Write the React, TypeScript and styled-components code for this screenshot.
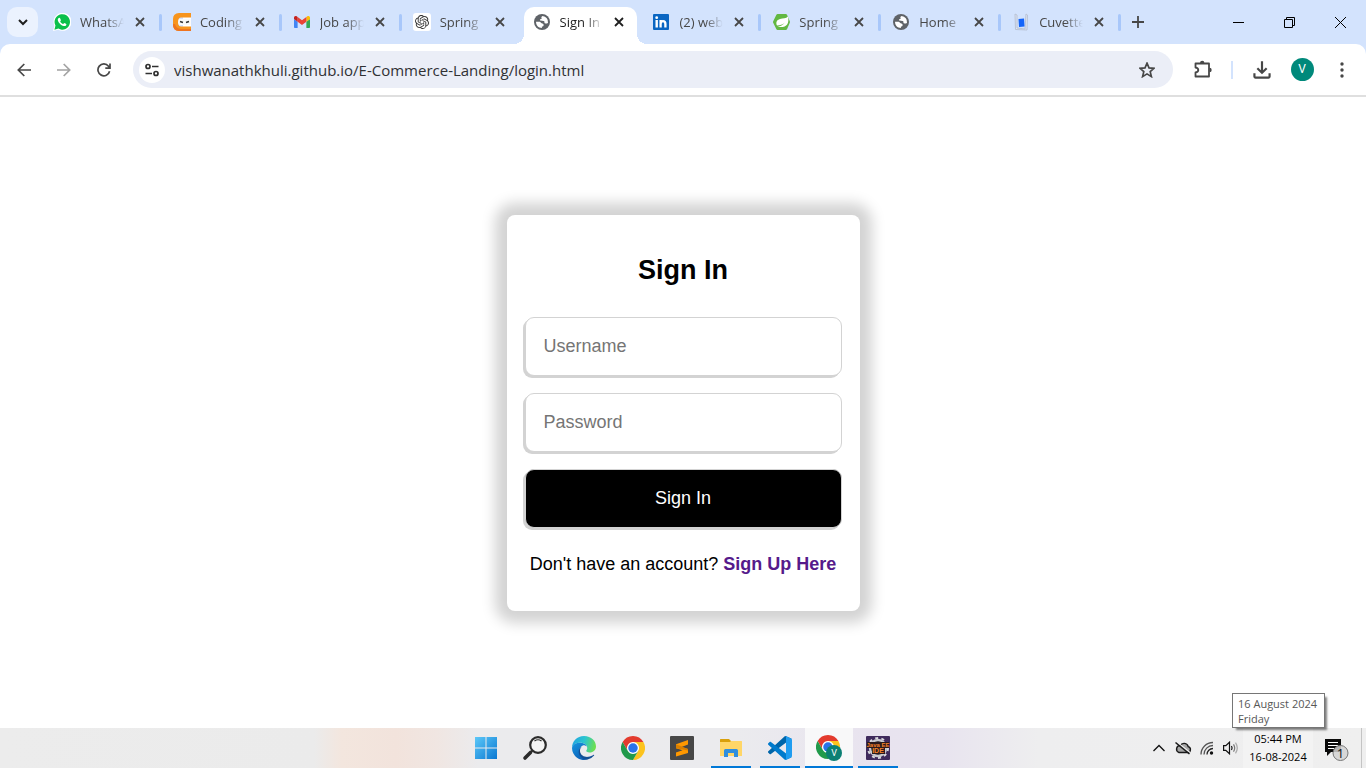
import React from 'react';
import styled, { createGlobalStyle, css } from 'styled-components';
import { SiOpenai } from 'react-icons/si';
import { MdOutlineFileDownload } from 'react-icons/md';

const uiFont = '"Open Sans", "Noto Sans", sans-serif';
const pageFont = '"Liberation Sans", Arial, sans-serif';

const GlobalStyle = createGlobalStyle`
  *, *::before, *::after { box-sizing: border-box; }
  body { margin: 0; background: #fff; font-family: ${uiFont}; }
  button { border: 0; padding: 0; background: none; font: inherit; color: inherit; cursor: pointer; }
  svg { display: block; flex: none; }
`;

const Screen = styled.div`
  min-height: 100vh;
  display: flex;
  flex-direction: column;
`;

/* ---------- tab strip ---------- */

const TabStrip = styled.header`
  height: 44px;
  display: flex;
  background: #d3e3fd;
`;

const TabSearch = styled.button`
  width: 31px;
  height: 30px;
  margin: 7px 4px 0 7px;
  display: grid;
  place-items: center;
  border-radius: 10px;
  background: #ebf2fe;
`;

const Tabs = styled.nav`
  flex: 1;
  min-width: 0;
  display: flex;
`;

const TabItem = styled.div<{ $active?: boolean; $divider?: boolean }>`
  position: relative;
  z-index: 0;
  flex: 1 1 0;
  min-width: 0;
  max-width: 240px;
  display: flex;
  align-items: center;
  padding-left: 12px;
  color: ${(p) => (p.$active ? '#1f1f1f' : '#474747')};

  ${(p) =>
    p.$divider &&
    css`
      &::after {
        content: '';
        position: absolute;
        right: 0;
        top: 14px;
        width: 3px;
        height: 17px;
        border-radius: 2px;
        background: #a8c7fa;
      }
    `}
`;

const ActiveShape = styled.span`
  position: absolute;
  z-index: -1;
  inset: 7px 4px 0 2px;
  border-radius: 10px 10px 0 0;
  background: #fff;

  &::before,
  &::after {
    content: '';
    position: absolute;
    bottom: 0;
    width: 10px;
    height: 10px;
  }
  &::before {
    right: 100%;
    background: radial-gradient(circle at 0 0, transparent 10px, #fff 10px);
  }
  &::after {
    left: 100%;
    background: radial-gradient(circle at 100% 0, transparent 10px, #fff 10px);
  }
`;

const TabLink = styled.a`
  flex: 1;
  min-width: 0;
  display: flex;
  align-items: center;
  gap: 10px;
  color: inherit;
  text-decoration: none;
`;

const TabTitle = styled.span`
  flex: 1;
  min-width: 0;
  overflow: hidden;
  white-space: nowrap;
  font-size: 13px;
  line-height: 20px;
  mask-image: linear-gradient(90deg, #000 calc(100% - 18px), transparent);
`;

const TabClose = styled.button`
  width: 16px;
  height: 16px;
  margin: 0 14px 0 8px;
  display: grid;
  place-items: center;
`;

const NewTab = styled.button`
  width: 34px;
  margin-right: 58px;
  display: grid;
  place-items: center;
  color: #474747;
`;

const WindowButton = styled.button`
  width: 51px;
  display: grid;
  place-items: center;
`;

/* ---------- toolbar ---------- */

const ToolbarBack = styled.div`
  background: #d3e3fd;
`;

const Toolbar = styled.div`
  height: 53px;
  display: flex;
  align-items: center;
  padding: 0 4px;
  border-bottom: 2px solid #dfdfdf;
  border-radius: 10px 10px 0 0;
  background: #fff;
`;

const ToolButton = styled.button<{ $dim?: boolean }>`
  width: 40px;
  height: 36px;
  display: grid;
  place-items: center;
  color: ${(p) => (p.$dim ? '#a3a3a3' : '#474747')};
`;

const Omnibox = styled.form`
  flex: 1;
  min-width: 0;
  height: 37px;
  margin: 0 10px 0 9px;
  padding: 0 6px;
  display: flex;
  align-items: center;
  border-radius: 19px;
  background: #ebeef7;
`;

const SiteInfo = styled.button`
  width: 26px;
  height: 26px;
  display: grid;
  place-items: center;
  border-radius: 50%;
  background: #fff;
  color: #303030;
`;

const AddressInput = styled.input`
  flex: 1;
  min-width: 0;
  height: 24px;
  margin-left: 9px;
  padding: 0;
  border: 0;
  outline: 0;
  background: transparent;
  color: #303134;
  font-family: ${uiFont};
  font-size: 15px;
`;

const ToolDivider = styled.span`
  width: 2px;
  height: 18px;
  margin: 0 9px 0 8px;
  background: #d3e3fd;
`;

const Avatar = styled.span`
  width: 23px;
  height: 23px;
  border-radius: 50%;
  background: #00897b;
  color: #fff;
  font: 12px/23px Roboto, sans-serif;
  text-align: center;
`;

/* ---------- page ---------- */

const Page = styled.main`
  flex: 1;
  display: flex;
  align-items: center;
  justify-content: center;
  padding: 32px 16px;
  font-family: ${pageFont};
`;

const Card = styled.form`
  width: 100%;
  max-width: 353px;
  padding: 37px 18px 35px;
  display: flex;
  flex-direction: column;
  gap: 17px;
  border-radius: 8px;
  background: #fff;
  box-shadow: 0 0 14px 12px lightgray;
`;

const Heading = styled.h1`
  margin: 0 0 12px;
  font-size: 27px;
  line-height: 36px;
  text-align: center;
`;

const controlStyle = css`
  width: 100%;
  height: 59px;
  border: 1px solid lightgray;
  border-radius: 9px;
  box-shadow: -2px 2px 0 lightgray;
  font-family: ${pageFont};
  font-size: 18px;
`;

const Field = styled.input`
  ${controlStyle}
  padding: 0 18px;
  background: #fff;
  outline: 0;

  &::placeholder {
    color: #757575;
  }
`;

const Submit = styled.button`
  ${controlStyle}
  border: 1px solid lightgray;
  background: #000;
  color: #fff;
`;

const Prompt = styled.p`
  margin: 7px 0 0;
  font-size: 18px;
  line-height: 24px;
  text-align: center;
  white-space: nowrap;

  a {
    color: #551a8b;
    font-weight: 700;
    text-decoration: none;
  }
`;

/* ---------- taskbar ---------- */

const Taskbar = styled.footer`
  height: 40px;
  display: grid;
  grid-template-columns: 1fr auto 1fr;
  background: linear-gradient(
    90deg,
    #ececec 0%,
    #ebebeb 23%,
    #f3e6de 25%,
    #f2e3dc 29%,
    #f0e6e2 32%,
    #ebebed 35%,
    #ebebee 54%,
    #e8e3ef 64%,
    #e8e4ef 69%,
    #eeeeef 76%,
    #efefef 100%
  );
`;

const Apps = styled.div`
  grid-column: 2;
  display: flex;
  gap: 1px;
  padding-right: 2px;
`;

const AppButton = styled.button<{ $running?: boolean; $focused?: boolean }>`
  position: relative;
  width: 48px;
  display: grid;
  place-items: center;
  background: ${(p) => (p.$focused ? '#f8f8f9' : 'transparent')};

  &::after {
    content: '';
    display: ${(p) => (p.$running ? 'block' : 'none')};
    position: absolute;
    bottom: 0;
    left: ${(p) => (p.$focused ? 0 : 4)}px;
    right: ${(p) => (p.$focused ? 0 : 4)}px;
    height: 2px;
    background: #0078d7;
  }
`;

const Tray = styled.div`
  grid-column: 3;
  display: flex;
  justify-content: flex-end;
`;

const TrayButton = styled.button`
  width: 24px;
  display: grid;
  place-items: center;
`;

const Clock = styled.div`
  position: relative;
  width: 70px;
  padding-top: 2px;
  background: #f3f3f3;
  color: #000;
  font-size: 11px;
  line-height: 18px;
  text-align: center;
  white-space: nowrap;

  time {
    display: block;
  }
`;

const DateTip = styled.div`
  position: absolute;
  right: -12px;
  bottom: 40px;
  width: 93px;
  height: 35px;
  padding: 2px 5px;
  border: 1px solid #767676;
  background: #fff;
  box-shadow: 3px 3px 2px -1px rgba(0, 0, 0, 0.5);
  color: #575757;
  font-size: 11px;
  line-height: 15px;
  text-align: left;
`;

const Notifications = styled.button`
  width: 49px;
  margin-right: 4px;
  padding-left: 10px;
  display: flex;
  align-items: center;
  border-right: 1px solid #c4c4c4;
`;

/* ---------- icons ---------- */

const Cross = () => (
  <svg width="10" height="10" viewBox="0 0 10 10" stroke="currentColor" strokeWidth="1.8">
    <path d="M1 1l8 8M9 1l-8 8" />
  </svg>
);

const WhatsAppIcon = () => (
  <svg width="18" height="18" viewBox="0 0 24 24">
    <path fill="#fff" d="M0 24L1.900 17A12 12 0 1 1 7 22.300z" />
    <path fill="#0ac04b" d="M1.900 22.200L3.300 16.800A10.300 10.300 0 1 1 7.200 20.800z" />
    <path
      fill="#fff"
      d="M8.400 6.200c-.8-.1-2.200 1.200-2 3 .3 2.700 4 7.400 8 8.200 2 .3 3.500-.8 3.500-2.500 0-.6-2.400-1.800-2.900-1.700-.6.2-1 1.500-1.500 1.400-1.200-.2-3.700-2.500-3.900-3.400 0-.5 1-1.100.9-1.700-.3-1-.9-3.100-2.100-3.300z"
    />
  </svg>
);

const NinjaIcon = () => (
  <svg width="18" height="18" viewBox="0 0 18 18">
    <path fill="#fff" d="M10 2h8v14h-8z" />
    <path fill="#f7941d" d="M6 0h12v4.500H8Q5.500 4.500 5.500 7v4.500Q5.500 13.500 8 13.500h10V18H6Q0 17.500 0 12V6Q0 .5 6 0z" />
    <path fill="#ee7420" d="M0 11v1q0 5.500 6 6h12v-2H8q-5-.5-6-5z" />
    <path fill="#fafafa" d="M6 6h11q1 0 1 1v4q0 1-1 1H7q-2 0-2-2.500T6 6z" />
    <path stroke="#333" strokeWidth="1.600" d="M7 8.500l3 1M13 9.500l3-1" />
  </svg>
);

const GmailIcon = () => (
  <svg width="16" height="12" viewBox="52 42 88 66">
    <path fill="#4285f4" d="M58 108h14V74L52 59v43c0 3.320 2.690 6 6 6" />
    <path fill="#34a853" d="M120 108h14c3.320 0 6-2.690 6-6V59l-20 15" />
    <path fill="#fbbc04" d="M120 48v26l20-15v-8c0-7.420-8.470-11.650-14.400-7.200" />
    <path fill="#ea4335" d="M72 74V48l24 18 24-18v26L96 92" />
    <path fill="#c5221f" d="M52 51v8l20 15V48l-5.600-4.200c-5.940-4.450-14.400-.22-14.400 7.200" />
  </svg>
);

const GptBox = styled.span`
  flex: none;
  width: 18px;
  height: 18px;
  display: grid;
  place-items: center;
  border-radius: 3px;
  background: #fff;
  color: #333;
`;

const GptIcon = () => (
  <GptBox>
    <SiOpenai size={14} />
  </GptBox>
);

const GlobeIcon = () => (
  <svg width="16" height="16" viewBox="0 0 16 16">
    <circle cx="8" cy="8" r="8" fill="#5f6368" />
    <path
      fill="#fff"
      d="M8.600 2c-1.200.7-1.600 1.200-1 2 .5.600-.4 1-1.200 1.200-.8.300-.5 1.200.2 1.400l3 .5c1 .2 1 1.400.8 2 .7.500 2.100.4 3.600-.2a6 6 0 0 0-5.400-6.900zM2 7.800c0 3.500 2.400 6.200 5.900 6.200v-1.400c1.500-.2 1.800-.9 1.700-1.900 0-.9-1-1.300-2-1.500C6.500 9 7 7.900 5.600 7.800z"
    />
  </svg>
);

const LinkedInIcon = () => (
  <svg width="16" height="16" viewBox="0 0 16 16">
    <rect width="16" height="16" rx="1" fill="#0a66c2" />
    <circle cx="3.700" cy="3.700" r="1.400" fill="#fff" />
    <path fill="#fff" d="M2.500 6h2.400v7.500H2.500z" />
    <path fill="none" stroke="#fff" strokeWidth="2.300" d="M7.600 13.500V6M7.600 10Q7.600 7.100 10 7.100T12.400 10v3.500" />
  </svg>
);

const SpringIcon = () => (
  <svg width="17" height="16" viewBox="0 0 17 16">
    <path fill="#62b842" d="M4.600 0h8.200q.8 0 1.200.8l2.800 6.400q.3.800 0 1.500L14 15.200q-.4.800-1.200.8H4.600q-.8 0-1.200-.7L.2 8.800q-.4-.8 0-1.600L3.400.8Q3.800 0 4.600 0z" />
    <path fill="#fff" d="M15 2.600c1 4.600.1 8.600-3.400 9.900-2.300.8-5 .6-7 .3C7.200 12.400 10 11.300 11.800 8.500 9.700 10.700 7 11.500 4 11.500 2.500 8.500 3.800 5.800 7 5c3-.6 6-.3 8-2.400z" />
  </svg>
);

const CuvetteIcon = () => (
  <svg width="14" height="18" viewBox="0 0 14 18">
    <path fill="#dfe6f3" stroke="#b9c3d6" d="M1 1l2 1v13l8 1 1-15 1.500 1L13 17l-11.500-.5z" />
    <path fill="#1565f9" d="M4.500 6l5.500-.5.500 8-5.500.5z" />
  </svg>
);

const SearchIcon = () => (
  <svg width="26" height="26" viewBox="0 0 26 26" fill="none" stroke="#2b2b2b">
    <circle cx="16" cy="10" r="7.800" strokeWidth="2.200" fill="#f4f4f4" />
    <path strokeWidth="3.600" strokeLinecap="round" d="M3 23l5.500-5.500" />
    <path strokeWidth="1.800" d="M8.500 17.500l2-2" />
    <path strokeWidth="1.200" d="M12.500 6Q16 3.500 19.500 6" />
  </svg>
);

const WindowsIcon = () => (
  <svg width="22" height="22" viewBox="0 0 22 22">
    <defs>
      <linearGradient id="win" x1="0" y1="0" x2="1" y2="1">
        <stop offset="0" stopColor="#5cc8f8" />
        <stop offset="1" stopColor="#0a78d2" />
      </linearGradient>
    </defs>
    <path fill="url(#win)" d="M0 0h10.500v10.500H0zM11.500 0H22v10.500H11.500zM0 11.500h10.500V22H0zM11.500 11.500H22V22H11.500z" />
  </svg>
);

const EdgeIcon = () => (
  <svg width="24" height="24" viewBox="0 0 24 24">
    <defs>
      <linearGradient id="edgeTop" x1="0" y1="0.300" x2="1" y2="0.500">
        <stop offset="0" stopColor="#22a5e0" />
        <stop offset="0.500" stopColor="#2cc5cf" />
        <stop offset="1" stopColor="#6fe04c" />
      </linearGradient>
      <linearGradient id="edgeSide" x1="0" y1="0" x2="0.600" y2="1">
        <stop offset="0" stopColor="#1795df" />
        <stop offset="1" stopColor="#0b61b8" />
      </linearGradient>
    </defs>
    <path fill="url(#edgeTop)" d="M0 12C0 5 5 0 12 0c7.500 0 12 5.200 12 10.500 0 3.500-2.800 6-6.200 6-2.600 0-4-.9-3.500-1.900.6-1 .9-1.500.9-2.600 0-3-3-5.200-7-5.200C3.800 6.800 1 9 0 12z" />
    <path fill="url(#edgeSide)" d="M0 12c.6-3.500 4-5.200 8-5.200 3.500 0 6 1.400 6.800 3.600-1-.9-2.200-1.200-3.400-1.200C8.500 10 6.800 13 7.700 16.500 8.600 20 11.500 22.300 15 23.500A12 12 0 0 1 0 12z" />
    <path fill="#124f96" d="M10 10.600c-1.500 1.200-2.400 3.200-1.900 5.400.8 3.400 4.400 5.300 8.300 4.800 2-.2 3.700-1 5.200-2 .5-.2.800.2.500.6A12 12 0 0 1 15 23.700c-4 0-8-3-8.300-7.700-.1-2.400 1.300-4.600 3.300-5.400z" />
  </svg>
);

const ChromeMark = () => (
  <g>
    <circle cx="24" cy="24" r="12" fill="#fff" />
    <path fill="#e33b2e" d="M24 12h20.780A23.990 23.990 0 0 0 3.220 12.003L13.608 30l.009-.002A11.985 11.985 0 0 1 24 12z" />
    <circle cx="24" cy="24" r="9.500" fill="#2a73e8" />
    <path fill="#fcc31e" d="M34.391 30.003L24.001 48A23.994 23.994 0 0 0 44.780 12.003H24l-.003.009a11.985 11.985 0 0 1 10.394 17.990z" />
    <path fill="#219a4b" d="M13.609 30.003L3.218 12.006A23.994 23.994 0 0 0 24.003 48l10.390-17.997-.007-.007a11.985 11.985 0 0 1-20.777.007z" />
  </g>
);

const ChromeIcon = () => (
  <svg width="24" height="24" viewBox="0 0 48 48">
    <ChromeMark />
  </svg>
);

const ChromeProfileIcon = () => (
  <svg width="26" height="26" viewBox="0 0 26 26">
    <svg width="24" height="24" viewBox="0 0 48 48">
      <ChromeMark />
    </svg>
    <circle cx="18" cy="18" r="8" fill="#0b8074" />
    <text x="18" y="21" fill="#fff" fontFamily="Roboto, sans-serif" fontSize="9" textAnchor="middle">
      V
    </text>
  </svg>
);

const SublimeIcon = () => (
  <svg width="24" height="24" viewBox="0 0 24 24">
    <rect width="24" height="24" rx="1" fill="#474747" />
    <path fill="#ff9800" d="M6 8.200L18 4v4.600L11.500 11 18 13v4L6 20.500v-4l6.500-2.300L6 12.200z" />
    <path fill="#d97f00" d="M6 8.200l12 4.800v1.500L6 12.200z" />
  </svg>
);

const FolderIcon = () => (
  <svg width="22" height="20" viewBox="0 0 22 20">
    <path fill="#d9a00b" d="M0 1.500Q0 1 .5 1H9l2 2v3H0z" />
    <path fill="#ffd667" d="M0 4h10l1-1h10.500q.5 0 .5.500V18H0z" />
    <path fill="#2f8ede" d="M4 19v-6.500q0-1.500 1.500-1.500h11q1.500 0 1.500 1.500V19h-4v-4H8v4z" />
  </svg>
);

const CodeIcon = () => (
  <svg width="24" height="24" viewBox="0 0 100 100">
    <path fill="#0065a9" d="M96.460 10.800L75.860.88C73.470-.27 70.620.21 68.750 2.080L1.300 63.580c-1.800 1.660-1.800 4.510 0 6.170l5.510 5c1.490 1.350 3.720 1.450 5.320.24L93.360 13.370C96.090 11.300 100 13.250 100 16.670v-.24c0-2.400-1.380-4.590-3.540-5.630z" />
    <path fill="#007acc" d="M96.460 89.200L75.860 99.120c-2.390 1.150-5.240.67-7.110-1.200L1.300 36.420c-1.800-1.660-1.800-4.510 0-6.170l5.510-5c1.490-1.350 3.720-1.450 5.320-.24l81.230 61.620c2.730 2.070 6.640.12 6.640-3.300v.24c0 2.400-1.380 4.590-3.540 5.630z" />
    <path fill="#1f9cf0" d="M75.860 99.130c-2.390 1.140-5.240.66-7.110-1.210 2.310 2.300 6.250.67 6.250-2.590V4.670c0-3.260-3.940-4.890-6.250-2.590 1.870-1.870 4.720-2.350 7.110-1.210l20.600 9.910c2.160 1.040 3.540 3.230 3.540 5.630v67.180c0 2.400-1.380 4.590-3.540 5.630z" />
  </svg>
);

const JavaIdeIcon = () => (
  <svg width="24" height="24" viewBox="0 0 24 24">
    <rect width="24" height="24" rx="1" fill="#3f2a5c" />
    <circle cx="12" cy="12" r="10" fill="none" stroke="#d9d9de" strokeWidth="2" strokeDasharray="3 3.280" />
    <circle cx="12" cy="12" r="8" fill="#1c1620" stroke="#c9c9cf" strokeWidth="2.400" />
    <path fill="#2a1a1c" d="M1 6h22v6h-4v6H6v-6H1z" />
    <g fill="#f5822a" fontFamily="'Liberation Sans', sans-serif" fontWeight="700" textAnchor="middle">
      <text x="12" y="11" fontSize="6">Java EE</text>
      <text x="12" y="17" fontSize="7">IDE</text>
    </g>
  </svg>
);

const CloudOffIcon = () => (
  <svg width="18" height="14" viewBox="0 0 18 14" fill="none" stroke="#1a1a1a" strokeWidth="1.400">
    <path fill="#a5a5a5" d="M5 11.500h8.500a3 3 0 0 0 .7-5.900A4.300 4.300 0 0 0 6.300 4.500 3.600 3.600 0 0 0 5 11.500z" />
    <path stroke="#efefef" strokeWidth="1.200" d="M3 1l13 10.500" />
    <path strokeWidth="1.600" d="M1.500 1.500l14 11.500" />
  </svg>
);

const WifiIcon = () => (
  <svg width="14" height="14" viewBox="0 0 14 14" fill="none" stroke="#222" strokeWidth="1.300">
    <path stroke="#555" d="M1 13.500A12 12 0 0 1 13 1.500M4 13.500A9 9 0 0 1 13 4.500" />
    <path d="M7 13.500a6 6 0 0 1 6-6" />
    <circle cx="11.500" cy="12" r="1.700" fill="#111" stroke="none" />
  </svg>
);

const SpeakerIcon = () => (
  <svg width="16" height="14" viewBox="0 0 16 14" fill="none" stroke="#111" strokeWidth="1.200">
    <path d="M.6 4.700h2.200L6.500 1.200v11.600L2.800 9.300H.6z" />
    <path d="M8.500 5q1.200 2 0 4" />
    <path stroke="#777" d="M10.500 3.300q2.400 3.700 0 7.400" />
    <path stroke="#aaa" d="M12.500 1.700q3.600 5.300 0 10.600" />
  </svg>
);

const NotificationIcon = () => (
  <svg width="26" height="26" viewBox="0 0 26 26">
    <path fill="#0a0a0a" d="M2 4h16v13H8l-4 4v-4H2z" />
    <path stroke="#fff" strokeWidth="1.200" d="M5 7.500h10M5 10.500h10M5 13.500h6" />
    <circle cx="17.500" cy="18" r="7.500" fill="#d2d2d2" fillOpacity="0.850" stroke="#777" strokeWidth="1" />
    <text x="17.500" y="23" fontSize="13" fontFamily={uiFont} textAnchor="middle" fill="#111">
      1
    </text>
  </svg>
);

const tabs = [
  { title: 'WhatsA', icon: <WhatsAppIcon /> },
  { title: 'Coding', icon: <NinjaIcon /> },
  { title: 'Job app', icon: <GmailIcon /> },
  { title: 'Spring', icon: <GptIcon /> },
  { title: 'Sign In', icon: <GlobeIcon /> },
  { title: '(2) web', icon: <LinkedInIcon /> },
  { title: 'Spring', icon: <SpringIcon /> },
  { title: 'Home', icon: <GlobeIcon /> },
  { title: 'Cuvette', icon: <CuvetteIcon /> },
];
const activeTab = 4;

const IconSlot = styled.span`
  width: 16px;
  height: 18px;
  display: flex;
  align-items: center;
  justify-content: center;
`;

const apps = [
  { name: 'Start', icon: <WindowsIcon /> },
  { name: 'Search', icon: <SearchIcon /> },
  { name: 'Edge', icon: <EdgeIcon /> },
  { name: 'Chrome', icon: <ChromeIcon /> },
  { name: 'Sublime Text', icon: <SublimeIcon /> },
  { name: 'File Explorer', icon: <FolderIcon />, running: true },
  { name: 'Visual Studio Code', icon: <CodeIcon />, running: true },
  { name: 'Chrome profile', icon: <ChromeProfileIcon />, running: true, focused: true },
  { name: 'Eclipse', icon: <JavaIdeIcon />, running: true },
];

export default function App() {
  const stop = (e: React.FormEvent) => e.preventDefault();
  return (
    <Screen>
      <GlobalStyle />
      <TabStrip>
        <TabSearch aria-label="Search tabs">
          <svg width="10" height="7" viewBox="0 0 10 7" fill="none" stroke="#1f1f1f" strokeWidth="2">
            <path d="M1 1l4 4 4-4" />
          </svg>
        </TabSearch>
        <Tabs>
          {tabs.map((tab, i) => (
            <TabItem key={i} $active={i === activeTab} $divider={i !== activeTab && i !== activeTab - 1}>
              {i === activeTab && <ActiveShape />}
              <TabLink href="#">
                <IconSlot>{tab.icon}</IconSlot>
                <TabTitle>{tab.title}</TabTitle>
              </TabLink>
              <TabClose aria-label={`Close ${tab.title}`}>
                <Cross />
              </TabClose>
            </TabItem>
          ))}
        </Tabs>
        <NewTab aria-label="New tab">
          <svg width="12" height="12" viewBox="0 0 12 12" stroke="currentColor" strokeWidth="1.800">
            <path d="M6 0v12M0 6h12" />
          </svg>
        </NewTab>
        <WindowButton aria-label="Minimize">
          <svg width="11" height="11" viewBox="0 0 11 11" stroke="#000">
            <path d="M0 5.500h11" />
          </svg>
        </WindowButton>
        <WindowButton aria-label="Restore">
          <svg width="11" height="11" viewBox="0 0 11 11" fill="none" stroke="#000">
            <path d="M.5 2.500h8v8h-8zM2.500 2.500v-2h8v8h-2" />
          </svg>
        </WindowButton>
        <WindowButton aria-label="Close">
          <svg width="11" height="11" viewBox="0 0 11 11" stroke="#000">
            <path d="M0 0l11 11M11 0L0 11" />
          </svg>
        </WindowButton>
      </TabStrip>

      <ToolbarBack>
        <Toolbar>
          <ToolButton aria-label="Back">
            <svg width="14" height="14" viewBox="0 0 14 14" fill="none" stroke="currentColor" strokeWidth="1.700">
              <path d="M14 7H1.500M7.300 1L1.300 7l6 6" />
            </svg>
          </ToolButton>
          <ToolButton aria-label="Forward" $dim>
            <svg width="14" height="14" viewBox="0 0 14 14" fill="none" stroke="currentColor" strokeWidth="1.700">
              <path d="M0 7h12.500M6.700 1l6 6-6 6" />
            </svg>
          </ToolButton>
          <ToolButton aria-label="Reload">
            <svg width="14" height="14" viewBox="0 0 14 14" fill="none" stroke="currentColor" strokeWidth="1.700">
              <path d="M12.600 8.200A5.900 5.900 0 1 1 11.500 3.200L12.800 4.800M13 .5v4.700H8.300" />
            </svg>
          </ToolButton>
          <Omnibox onSubmit={stop}>
            <SiteInfo type="button" aria-label="Site information">
              <svg width="14" height="14" viewBox="0 0 14 14" fill="none" stroke="currentColor" strokeWidth="1.700">
                <circle cx="3" cy="3.500" r="2" />
                <path d="M7 3.500h6.500M.5 10.500H7" />
                <circle cx="11" cy="10.500" r="2" />
              </svg>
            </SiteInfo>
            <AddressInput
              aria-label="Address"
              defaultValue="vishwanathkhuli.github.io/E-Commerce-Landing/login.html"
            />
            <ToolButton type="button" aria-label="Bookmark this tab">
              <svg width="16" height="16" viewBox="1 1 16 16" fill="none" stroke="currentColor" strokeWidth="1.700">
                <path d="M9 2.200l2 4.700 5 .4-3.800 3.300 1.200 5L9 12.900l-4.400 2.700 1.200-5L2 7.300l5-.4z" />
              </svg>
            </ToolButton>
          </Omnibox>
          <ToolButton aria-label="Extensions">
            <svg width="20" height="20" viewBox="0 0 20 20">
              <path
                fill="none"
                stroke="currentColor"
                strokeWidth="1.800"
                strokeLinejoin="round"
                d="M2.500 3.500H16v13H2.500v-4Q5.300 12 5.300 10T2.500 7.500z"
              />
              <path fill="currentColor" d="M7 3a2.200 2.200 0 0 1 4.400 0zM16.500 7.800a2.200 2.200 0 0 1 0 4.400z" />
            </svg>
          </ToolButton>
          <ToolDivider />
          <ToolButton aria-label="Downloads">
            <MdOutlineFileDownload size={26} />
          </ToolButton>
          <ToolButton aria-label="Profile">
            <Avatar>V</Avatar>
          </ToolButton>
          <ToolButton aria-label="Menu">
            <svg width="4" height="16" viewBox="0 0 4 16" fill="currentColor">
              <circle cx="2" cy="2" r="1.700" />
              <circle cx="2" cy="8" r="1.700" />
              <circle cx="2" cy="14" r="1.700" />
            </svg>
          </ToolButton>
        </Toolbar>
      </ToolbarBack>

      <Page>
        <Card onSubmit={stop}>
          <Heading>Sign In</Heading>
          <Field type="text" placeholder="Username" aria-label="Username" />
          <Field type="password" placeholder="Password" aria-label="Password" />
          <Submit type="submit">Sign In</Submit>
          <Prompt>
            Don't have an account? <a href="#">Sign Up Here</a>
          </Prompt>
        </Card>
      </Page>

      <Taskbar>
        <Apps>
          {apps.map((app) => (
            <AppButton key={app.name} aria-label={app.name} $running={app.running} $focused={app.focused}>
              {app.icon}
            </AppButton>
          ))}
        </Apps>
        <Tray>
          <TrayButton aria-label="Show hidden icons">
            <svg width="12" height="8" viewBox="0 0 12 8" fill="none" stroke="#111" strokeWidth="1.300">
              <path d="M.5 7L6 1.500 11.500 7" />
            </svg>
          </TrayButton>
          <TrayButton aria-label="OneDrive">
            <CloudOffIcon />
          </TrayButton>
          <TrayButton aria-label="Network">
            <WifiIcon />
          </TrayButton>
          <TrayButton aria-label="Volume">
            <SpeakerIcon />
          </TrayButton>
          <Clock>
            <time>05:44 PM</time>
            <time>16-08-2024</time>
            <DateTip role="tooltip">
              16 August 2024
              <br />
              Friday
            </DateTip>
          </Clock>
          <Notifications aria-label="Notifications">
            <NotificationIcon />
          </Notifications>
        </Tray>
      </Taskbar>
    </Screen>
  );
}
